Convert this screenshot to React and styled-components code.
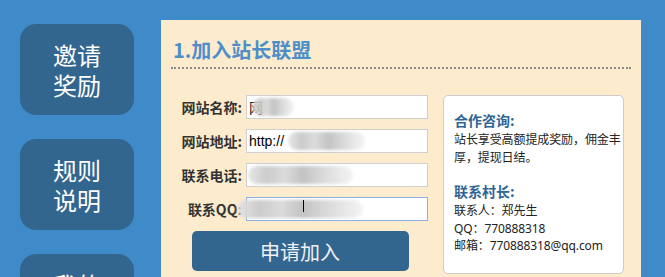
import React from 'react';
import styled, { createGlobalStyle } from 'styled-components';

const GlobalStyle = createGlobalStyle`
  html, body {
    margin: 0;
    padding: 0;
    height: 100%;
    overflow: hidden;
    background: #3f8bc9;
    font-family: "Noto Sans", "Noto Sans CJK SC", sans-serif;
  }
`;

const Page = styled.div`
  display: flex;
  align-items: flex-start;
  height: 277px;
`;

const Sidebar = styled.nav`
  width: 161px;
  flex-shrink: 0;
  display: flex;
  flex-direction: column;
  gap: 24px;
  padding: 24px 0 0 20px;
  box-sizing: border-box;
`;

const SideButton = styled.a`
  width: 114px;
  height: 91px;
  border-radius: 16px;
  background: #33668f;
  color: #fff;
  font-family: "Noto Sans CJK SC", sans-serif;
  font-size: 24px;
  line-height: 30px;
  display: flex;
  align-items: center;
  justify-content: center;
  text-align: center;
  text-decoration: none;
  flex-shrink: 0;
`;

const Panel = styled.main`
  margin-top: 20px;
  width: 480px;
  height: 300px;
  background: #fdebcd;
  padding: 15px 10px 0 10px;
  box-sizing: border-box;
`;

const Title = styled.h2`
  margin: 0;
  font-family: "Noto Sans CJK SC", sans-serif;
  font-size: 20px;
  font-weight: bold;
  line-height: 30px;
  color: #4e8fca;
  padding: 0 0 2px 2px;
  border-bottom: 2px dotted #8a8a8a;
`;

const Content = styled.div`
  display: flex;
  align-items: flex-start;
  gap: 14px;
  margin-top: 26px;
`;

const Form = styled.form`
  width: 258px;
  display: flex;
  flex-direction: column;
  align-items: center;
  gap: 10px;
`;

const Row = styled.div`
  width: 100%;
  display: grid;
  grid-template-columns: 71px 182px;
  column-gap: 4px;
  align-items: center;
`;

const Label = styled.label`
  text-align: right;
  font-family: "Noto Sans CJK SC", sans-serif;
  font-size: 14px;
  font-weight: bold;
  color: #333;
  white-space: nowrap;
`;

const Field = styled.div`
  position: relative;
  height: 24px;
`;

const Input = styled.input`
  box-sizing: border-box;
  width: 100%;
  height: 24px;
  border: 1px solid ${p => (p.$focus ? '#8db1e3' : '#cfcfcf')};
  background: #fff;
  padding: 0 2px;
  font-family: "Liberation Sans", "Noto Sans CJK SC", sans-serif;
  font-size: 14px;
  color: #000;
  outline: none;
`;

const Smudge = styled.span`
  position: absolute;
  top: 3px;
  height: 18px;
  border-radius: 9px;
  background: linear-gradient(90deg, #e4e4e4 0%, #c6c6c6 18%, #d8d8d8 35%, #bdbdbd 52%, #d4d4d4 70%, #e8e8e8 88%, #f2f2f2 100%);
  filter: blur(1.5px);
  opacity: 0.9;
  z-index: 1;
`;

const Caret = styled.span`
  position: absolute;
  top: 3px;
  width: 1px;
  height: 12px;
  background: #000;
  z-index: 2;
`;

const Submit = styled.button`
  width: 217px;
  height: 40px;
  border: none;
  border-radius: 5px;
  background: #33668f;
  color: #f0f0f0;
  font-family: "Noto Sans CJK SC", sans-serif;
  font-size: 20px;
  cursor: pointer;
`;

const InfoBox = styled.aside`
  width: 181px;
  height: 179px;
  box-sizing: border-box;
  background: #fff;
  border: 1px solid #cccccc;
  border-radius: 5px;
  padding: 14px 0 0 10px;
  font-family: "Noto Sans", "Noto Sans CJK SC", sans-serif;
  font-size: 12px;
  line-height: 17.5px;
  color: #222;
`;

const InfoTitle = styled.h4`
  margin: 0;
  font-family: "Noto Sans CJK SC", sans-serif;
  font-size: 14px;
  font-weight: bold;
  line-height: 21px;
  color: #2f6497;
`;

const InfoText = styled.p`
  margin: 0 0 15px 0;
  white-space: pre-line;
  letter-spacing: -0.1px;
`;

const fields = [
  { label: '网站名称:', value: '网', smudge: [6, 42] },
  { label: '网站地址:', value: 'http://', smudge: [42, 77] },
  { label: '联系电话:', value: '', smudge: [2, 105] },
  { label: '联系QQ:', value: '', smudge: [-9, 126], focus: true, caret: 57 },
];

export default function App() {
  return (
    <>
      <GlobalStyle />
      <Page>
        <Sidebar>
          <SideButton href="#">邀请<br />奖励</SideButton>
          <SideButton href="#">规则<br />说明</SideButton>
          <SideButton href="#">我的<br />收益</SideButton>
        </Sidebar>
        <Panel>
          <Title>1.加入站长联盟</Title>
          <Content>
            <Form onSubmit={e => e.preventDefault()}>
              {fields.map(f => (
                <Row key={f.label}>
                  <Label>{f.label}</Label>
                  <Field>
                    <Input readOnly value={f.value} $focus={f.focus} />
                    <Smudge style={{ left: f.smudge[0], width: f.smudge[1] }} />
                    {f.caret && <Caret style={{ left: f.caret }} />}
                  </Field>
                </Row>
              ))}
              <Submit type="submit">申请加入</Submit>
            </Form>
            <InfoBox>
              <InfoTitle>合作咨询:</InfoTitle>
              <InfoText>站长享受高额提成奖励，佣金丰厚，提现日结。</InfoText>
              <InfoTitle>联系村长:</InfoTitle>
              <InfoText>
                联系人：郑先生{'\n'}QQ：770888318{'\n'}邮箱：770888318@qq.com
              </InfoText>
            </InfoBox>
          </Content>
        </Panel>
      </Page>
    </>
  );
}
